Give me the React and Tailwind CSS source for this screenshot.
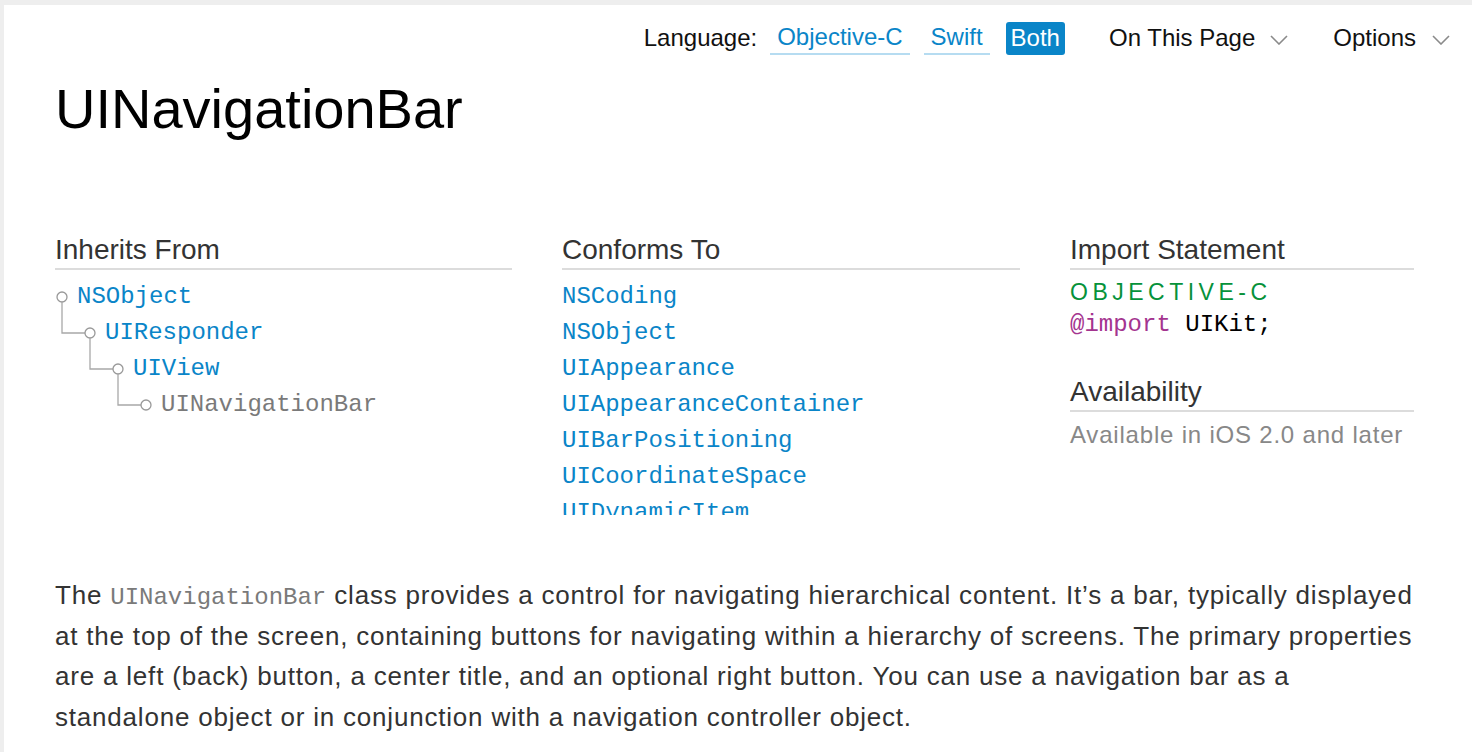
import React from 'react';

const SANS = { fontFamily: '"Liberation Sans", Arial, sans-serif' };
const MONO = { fontFamily: '"Liberation Mono", "DejaVu Sans Mono", monospace' };

const TREE = ['NSObject', 'UIResponder', 'UIView', 'UINavigationBar'];

const CONFORMS = [
    'NSCoding',
    'NSObject',
    'UIAppearance',
    'UIAppearanceContainer',
    'UIBarPositioning',
    'UICoordinateSpace',
    'UIDynamicItem',
];

function Chevron() {
    return (
        <svg width="18" height="10" viewBox="0 0 18 10" className="mt-[4px]">
            <polyline points="1,1 9,9 17,1" fill="none" stroke="#8a8a8a" strokeWidth="1.6" />
        </svg>
    );
}

function SectionHeading({ children }) {
    return (
        <h3 className="text-[28px] leading-[36px] text-[#333] border-b-2 border-[#dcdcdc]">
            {children}
        </h3>
    );
}

function TreeRow({ name, level, last }) {
    return (
        <div className="flex items-center h-[36px]" style={{ paddingLeft: level * 28 }}>
            <svg width="14" height="36" className="overflow-visible shrink-0">
                {level > 0 && (
                    <path d="M -21 -13 V 18 H 2" fill="none" stroke="#a8a8a8" strokeWidth="1.3" />
                )}
                <circle cx="7" cy="18" r="5" fill="#fff" stroke="#999" strokeWidth="1.3" />
            </svg>
            <span
                className={`ml-[8px] text-[24px] leading-[36px] ${last ? 'text-[#7a7a7a]' : 'text-[#0a85c8]'}`}
                style={MONO}
            >
                {name}
            </span>
        </div>
    );
}

export default function App() {
    return (
        <div className="min-h-screen bg-[#eeeeee] pt-[5px] pl-[4px]" style={SANS}>
            <div className="bg-white min-h-[747px] pl-[51px]">
                {/* Top bar */}
                <div className="h-[66px] flex items-center justify-end pr-[22px] text-[24px] text-[#111]">
                    <span>Language:</span>
                    <span className="ml-[13px] h-[33px] px-[7px] flex items-center border-b-2 border-[#b6dcf1] text-[#0a85c8]">
                        Objective-C
                    </span>
                    <span className="ml-[14px] h-[33px] px-[7px] flex items-center border-b-2 border-[#b6dcf1] text-[#0a85c8]">
                        Swift
                    </span>
                    <span className="ml-[16px] h-[33px] px-[5px] flex items-center rounded-[3px] bg-[#0a85c8] text-white">
                        Both
                    </span>
                    <span className="ml-[44px]">On This Page</span>
                    <span className="ml-[15px]"><Chevron /></span>
                    <span className="ml-[45px]">Options</span>
                    <span className="ml-[16px]"><Chevron /></span>
                </div>

                {/* Title */}
                <h1 className="mt-[10px] text-[56px] leading-none text-black">UINavigationBar</h1>

                {/* Sections */}
                <div className="mt-[95px] grid grid-cols-[457px_458px_344px] gap-x-[50px]">
                    <div>
                        <SectionHeading>Inherits From</SectionHeading>
                        <div className="mt-[9px]">
                            {TREE.map((name, i) => (
                                <TreeRow key={name} name={name} level={i} last={i === TREE.length - 1} />
                            ))}
                        </div>
                    </div>

                    <div>
                        <SectionHeading>Conforms To</SectionHeading>
                        <div className="mt-[9px] h-[236px] overflow-hidden">
                            {CONFORMS.map((name) => (
                                <div key={name} className="h-[36px] leading-[36px] text-[24px] text-[#0a85c8]" style={MONO}>
                                    {name}
                                </div>
                            ))}
                        </div>
                    </div>

                    <div>
                        <SectionHeading>Import Statement</SectionHeading>
                        <div className="mt-[6px] h-[32px] leading-[32px] text-[23px] tracking-[4.5px] text-[#06923a]">
                            OBJECTIVE-C
                        </div>
                        <div className="h-[33px] leading-[33px] text-[24px]" style={MONO}>
                            <span className="text-[#a4348f]">@import</span>{' '}
                            <span className="text-black">UIKit;</span>
                        </div>

                        <div className="mt-[33px]">
                            <SectionHeading>Availability</SectionHeading>
                        </div>
                        <div className="mt-[7px] h-[32px] leading-[32px] text-[24px] tracking-[0.8px] text-[#888]">
                            Available in iOS 2.0 and later
                        </div>
                    </div>
                </div>

                {/* Overview */}
                <p className="mt-[60px] w-[1368px] text-[26px] leading-[40.5px] tracking-[0.8px] text-[#333]">
                    The{' '}
                    <code className="text-[24px] leading-none tracking-normal text-[#7a7a7a]" style={MONO}>UINavigationBar</code>{' '}
                    class provides a control for navigating hierarchical content. It’s a bar, typically
                    displayed at the top of the screen, containing buttons for navigating within a hierarchy
                    of screens. The primary properties are a left (back) button, a center title, and an
                    optional right button. You can use a navigation bar as a standalone object or in
                    conjunction with a navigation controller object.
                </p>
            </div>
        </div>
    );
}
